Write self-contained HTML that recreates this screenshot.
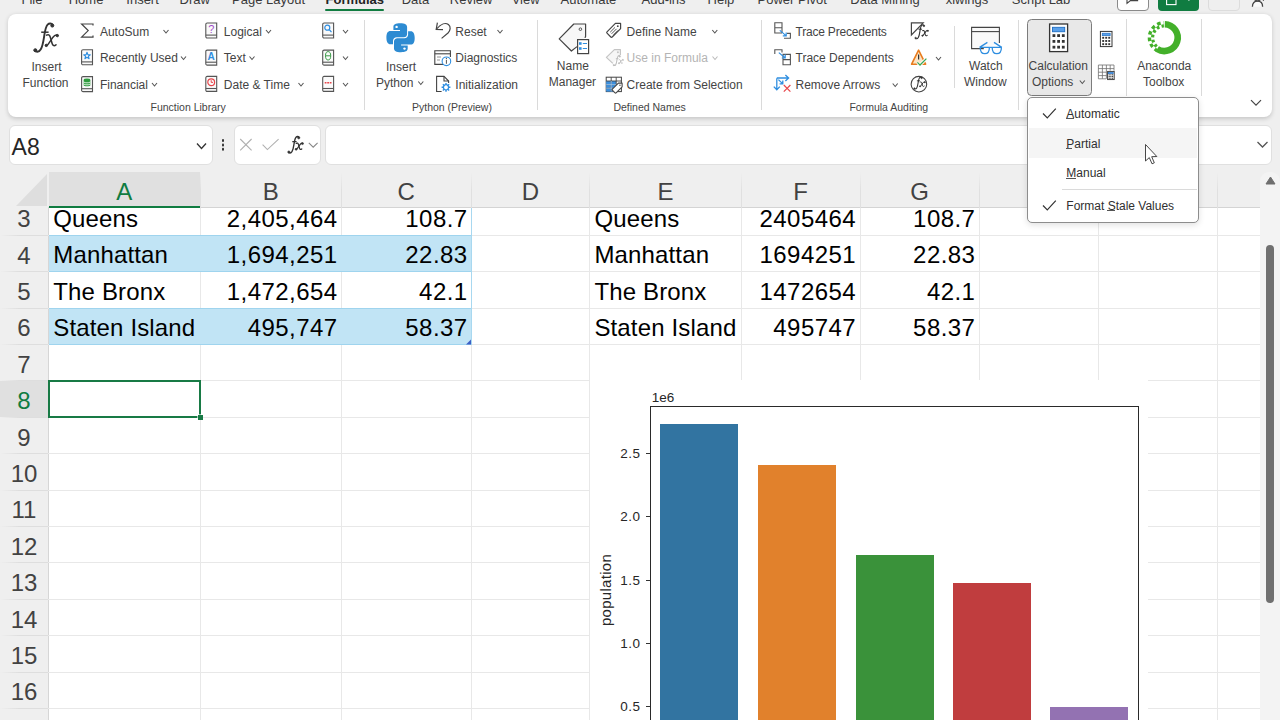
<!DOCTYPE html><html><head><meta charset="utf-8"><style>
*{margin:0;padding:0;box-sizing:border-box}
html,body{width:1280px;height:720px;overflow:hidden;background:#efefef;font-family:"Liberation Sans",sans-serif;position:relative}
.t{position:absolute;white-space:pre;line-height:normal}
.a{position:absolute}
svg{position:absolute;overflow:visible}
</style></head><body>
<div class="t" style="left:21.5px;top:-7.87px;font-size:13px;color:#3a3a3a;font-weight:normal;">File</div>
<div class="t" style="left:68.7px;top:-7.87px;font-size:13px;color:#3a3a3a;font-weight:normal;">Home</div>
<div class="t" style="left:126.3px;top:-7.87px;font-size:13px;color:#3a3a3a;font-weight:normal;">Insert</div>
<div class="t" style="left:179.5px;top:-7.87px;font-size:13px;color:#3a3a3a;font-weight:normal;">Draw</div>
<div class="t" style="left:232px;top:-7.87px;font-size:13px;color:#3a3a3a;font-weight:normal;">Page Layout</div>
<div class="t" style="left:401.7px;top:-7.87px;font-size:13px;color:#3a3a3a;font-weight:normal;">Data</div>
<div class="t" style="left:449.8px;top:-7.87px;font-size:13px;color:#3a3a3a;font-weight:normal;">Review</div>
<div class="t" style="left:511.7px;top:-7.87px;font-size:13px;color:#3a3a3a;font-weight:normal;">View</div>
<div class="t" style="left:560.6px;top:-7.87px;font-size:13px;color:#3a3a3a;font-weight:normal;">Automate</div>
<div class="t" style="left:641.5px;top:-7.87px;font-size:13px;color:#3a3a3a;font-weight:normal;">Add-ins</div>
<div class="t" style="left:707.6px;top:-7.87px;font-size:13px;color:#3a3a3a;font-weight:normal;">Help</div>
<div class="t" style="left:757.5px;top:-7.87px;font-size:13px;color:#3a3a3a;font-weight:normal;">Power Pivot</div>
<div class="t" style="left:850.3px;top:-7.87px;font-size:13px;color:#3a3a3a;font-weight:normal;">Data Mining</div>
<div class="t" style="left:945.7px;top:-7.87px;font-size:13px;color:#3a3a3a;font-weight:normal;">xlwings</div>
<div class="t" style="left:1011.8px;top:-7.87px;font-size:13px;color:#3a3a3a;font-weight:normal;">Script Lab</div>
<div class="t" style="left:325.5px;top:-7.87px;font-size:13px;color:#242424;font-weight:bold;">Formulas</div>
<div class="a" style="left:325px;top:9px;width:58.5px;height:2.2px;border-radius:1px;background:#107c41"></div>
<div class="a" style="left:1117px;top:-6px;width:32px;height:16.5px;border:1px solid #8a8a8a;border-radius:4px;background:#fff"></div>
<div class="a" style="left:1158px;top:-6px;width:41px;height:16.5px;border-radius:4px;background:#107c41"></div>
<div class="a" style="left:1208px;top:-6px;width:31.5px;height:16.5px;border:1px solid #dcdcdc;border-radius:4px;background:#efefef"></div>
<div class="a" style="left:8px;top:14px;width:1263.5px;height:103px;background:#fff;border-radius:8px;box-shadow:0 1.5px 4px rgba(0,0,0,0.17)"></div>
<div class="a" style="left:364.0px;top:20px;width:1px;height:90px;background:#dadada"></div>
<div class="a" style="left:537.0px;top:20px;width:1px;height:90px;background:#dadada"></div>
<div class="a" style="left:761.0px;top:20px;width:1px;height:90px;background:#dadada"></div>
<div class="a" style="left:954.2px;top:26px;width:1px;height:62px;background:#dadada"></div>
<div class="a" style="left:1017.5px;top:20px;width:1px;height:90px;background:#dadada"></div>
<div class="a" style="left:1125.5px;top:19px;width:1px;height:77px;background:#dadada"></div>
<div class="a" style="left:1201.1px;top:19px;width:1px;height:77px;background:#dadada"></div>
<div class="t" style="left:31.5px;top:59.64px;font-size:12px;color:#444444;font-weight:normal;">Insert</div>
<div class="t" style="left:22.5px;top:75.64px;font-size:12px;color:#444444;font-weight:normal;">Function</div>
<div class="t" style="left:99.9px;top:24.94px;font-size:12px;color:#444444;font-weight:normal;">AutoSum</div>
<div class="t" style="left:99.9px;top:51.44px;font-size:12px;color:#444444;font-weight:normal;">Recently Used</div>
<div class="t" style="left:99.9px;top:77.94px;font-size:12px;color:#444444;font-weight:normal;">Financial</div>
<div class="t" style="left:223.8px;top:24.94px;font-size:12px;color:#444444;font-weight:normal;">Logical</div>
<div class="t" style="left:223.8px;top:51.44px;font-size:12px;color:#444444;font-weight:normal;">Text</div>
<div class="t" style="left:223.8px;top:77.94px;font-size:12px;color:#444444;font-weight:normal;">Date &amp; Time</div>
<div class="t" style="left:150.5px;top:100.50px;font-size:10.5px;color:#444;font-weight:normal;">Function Library</div>
<div class="t" style="left:386px;top:59.64px;font-size:12px;color:#444444;font-weight:normal;">Insert</div>
<div class="t" style="left:376px;top:76.14px;font-size:12px;color:#444444;font-weight:normal;">Python</div>
<div class="t" style="left:455.3px;top:24.94px;font-size:12px;color:#444444;font-weight:normal;">Reset</div>
<div class="t" style="left:455.3px;top:51.44px;font-size:12px;color:#444444;font-weight:normal;">Diagnostics</div>
<div class="t" style="left:455.3px;top:77.94px;font-size:12px;color:#444444;font-weight:normal;">Initialization</div>
<div class="t" style="left:412px;top:100.50px;font-size:10.5px;color:#444;font-weight:normal;">Python (Preview)</div>
<div class="t" style="left:556.8px;top:58.94px;font-size:12px;color:#444444;font-weight:normal;">Name</div>
<div class="t" style="left:548.75px;top:74.94px;font-size:12px;color:#444444;font-weight:normal;">Manager</div>
<div class="t" style="left:626.6px;top:24.94px;font-size:12px;color:#444444;font-weight:normal;">Define Name</div>
<div class="t" style="left:626.6px;top:51.44px;font-size:12px;color:#b4b4b4;font-weight:normal;">Use in Formula</div>
<div class="t" style="left:626.6px;top:77.94px;font-size:12px;color:#444444;font-weight:normal;">Create from Selection</div>
<div class="t" style="left:613.4px;top:100.50px;font-size:10.5px;color:#444;font-weight:normal;">Defined Names</div>
<div class="t" style="left:795.5px;top:24.94px;font-size:12px;color:#444444;font-weight:normal;letter-spacing:-0.2px;">Trace Precedents</div>
<div class="t" style="left:795.5px;top:51.44px;font-size:12px;color:#444444;font-weight:normal;">Trace Dependents</div>
<div class="t" style="left:795.5px;top:77.94px;font-size:12px;color:#444444;font-weight:normal;">Remove Arrows</div>
<div class="t" style="left:969px;top:59.14px;font-size:12px;color:#444444;font-weight:normal;">Watch</div>
<div class="t" style="left:963.9px;top:74.64px;font-size:12px;color:#444444;font-weight:normal;">Window</div>
<div class="t" style="left:849.4px;top:100.50px;font-size:10.5px;color:#444;font-weight:normal;">Formula Auditing</div>
<div class="a" style="left:1027px;top:19px;width:65px;height:77px;border:1px solid #7c7c7c;border-radius:4.5px;background:#e8e8e8"></div>
<div class="t" style="left:1028.6px;top:59.14px;font-size:12px;color:#444444;font-weight:normal;">Calculation</div>
<div class="t" style="left:1032px;top:75.44px;font-size:12px;color:#444444;font-weight:normal;">Options</div>
<div class="t" style="left:1137.2px;top:59.14px;font-size:12px;color:#444444;font-weight:normal;">Anaconda</div>
<div class="t" style="left:1143px;top:75.44px;font-size:12px;color:#444444;font-weight:normal;">Toolbox</div>
<svg style="left:0;top:0" width="1" height="1"><path d="M163.5 30.0 L166 33.0 L168.5 30.0" fill="none" stroke="#555" stroke-width="1.1"/></svg>
<svg style="left:0;top:0" width="1" height="1"><path d="M181.0 56.5 L183.5 59.5 L186.0 56.5" fill="none" stroke="#555" stroke-width="1.1"/></svg>
<svg style="left:0;top:0" width="1" height="1"><path d="M152.0 83.0 L154.5 86.0 L157.0 83.0" fill="none" stroke="#555" stroke-width="1.1"/></svg>
<svg style="left:0;top:0" width="1" height="1"><path d="M266.0 30.0 L268.5 33.0 L271.0 30.0" fill="none" stroke="#555" stroke-width="1.1"/></svg>
<svg style="left:0;top:0" width="1" height="1"><path d="M249.5 56.5 L252 59.5 L254.5 56.5" fill="none" stroke="#555" stroke-width="1.1"/></svg>
<svg style="left:0;top:0" width="1" height="1"><path d="M298.5 83.0 L301 86.0 L303.5 83.0" fill="none" stroke="#555" stroke-width="1.1"/></svg>
<svg style="left:0;top:0" width="1" height="1"><path d="M343.0 30.0 L345.5 33.0 L348.0 30.0" fill="none" stroke="#555" stroke-width="1.1"/></svg>
<svg style="left:0;top:0" width="1" height="1"><path d="M343.0 56.5 L345.5 59.5 L348.0 56.5" fill="none" stroke="#555" stroke-width="1.1"/></svg>
<svg style="left:0;top:0" width="1" height="1"><path d="M343.0 83.0 L345.5 86.0 L348.0 83.0" fill="none" stroke="#555" stroke-width="1.1"/></svg>
<svg style="left:0;top:0" width="1" height="1"><path d="M418.3 81.5 L420.8 84.5 L423.3 81.5" fill="none" stroke="#555" stroke-width="1.1"/></svg>
<svg style="left:0;top:0" width="1" height="1"><path d="M497.5 30.0 L500 33.0 L502.5 30.0" fill="none" stroke="#555" stroke-width="1.1"/></svg>
<svg style="left:0;top:0" width="1" height="1"><path d="M712.3 30.0 L714.8 33.0 L717.3 30.0" fill="none" stroke="#555" stroke-width="1.1"/></svg>
<svg style="left:0;top:0" width="1" height="1"><path d="M892.7 83.5 L895.2 86.5 L897.7 83.5" fill="none" stroke="#555" stroke-width="1.1"/></svg>
<svg style="left:0;top:0" width="1" height="1"><path d="M936.0 57.0 L938.5 60.0 L941.0 57.0" fill="none" stroke="#555" stroke-width="1.1"/></svg>
<svg style="left:0;top:0" width="1" height="1"><path d="M1079.8 80.5 L1082.3 83.5 L1084.8 80.5" fill="none" stroke="#555" stroke-width="1.1"/></svg>
<svg style="left:0;top:0" width="1" height="1"><path d="M712.5 56.5 L715 59.5 L717.5 56.5" fill="none" stroke="#bbb" stroke-width="1.1"/></svg>
<svg style="left:0;top:0" width="1" height="1"><path d="M1251.0 100.2 L1256 105.2 L1261.0 100.2" fill="none" stroke="#444" stroke-width="1.2"/></svg>
<div class="a" style="left:9px;top:125px;width:203.5px;height:39.5px;background:#fff;border:1px solid #e0e0e0;border-radius:6px"></div>
<div class="t" style="left:11.6px;top:133.78px;font-size:23px;color:#262626;font-weight:normal;">A8</div>
<svg style="left:0;top:0" width="1" height="1"><path d="M197.0 143.5 L201.5 148.5 L206.0 143.5" fill="none" stroke="#333" stroke-width="1.3"/></svg>
<div class="a" style="left:221.8px;top:139.4px;width:2.4px;height:2.4px;border-radius:2px;background:#333;box-shadow:0 4.4px 0 #333,0 8.8px 0 #333"></div>
<div class="a" style="left:233.5px;top:125px;width:87px;height:39.5px;background:#fff;border:1px solid #e0e0e0;border-radius:6px"></div>
<div class="a" style="left:324.5px;top:125px;width:947px;height:39.5px;background:#fff;border:1px solid #e0e0e0;border-radius:6px"></div>
<svg style="left:0;top:0" width="1" height="1"><path d="M1257.5 142.0 L1262.5 147.0 L1267.5 142.0" fill="none" stroke="#555" stroke-width="1.3"/></svg>
<svg style="left:0;top:0" width="1280" height="720"><g transform="" fill="#333" stroke="#333"><path d="M52.6 24.6 C51.6 23.2 49.2 23.0 47.6 24.6 C45.6 26.6 45.0 31 44.2 36 C43.4 41 42.8 46 40.8 49.2 C39.4 51.6 37.2 52.2 35.4 51.2" fill="none" stroke="#333" stroke-width="1.9" stroke-linecap="round"/><circle cx="52.3" cy="25.6" r="1.5" fill="#333"/><circle cx="35.3" cy="50.2" r="1.5" fill="#333"/><path d="M41.2 32.2 H48.6" stroke="#333" stroke-width="1.5"/><g transform="translate(0 0)"><path d="M46.5 35.2 C48.2 34.2 49.6 34.6 50.4 37.5 L52.2 43.8 C52.8 45.8 54.2 46.2 56 44.8" fill="none" stroke="#333" stroke-width="1.5" stroke-linecap="round"/><path d="M57.6 35.4 C56 34.4 54.6 35 53 37.2 L48.6 43.6 C47.6 45.2 46.8 45.8 45.8 45.4" fill="none" stroke="#333" stroke-width="1.5" stroke-linecap="round"/><circle cx="57.3" cy="35.6" r="1.2" fill="#333"/><circle cx="46.3" cy="45.4" r="1.2" fill="#333"/></g></g><g transform="translate(268.4 122.95) scale(0.58)" fill="#333" stroke="#333"><path d="M52.6 24.6 C51.6 23.2 49.2 23.0 47.6 24.6 C45.6 26.6 45.0 31 44.2 36 C43.4 41 42.8 46 40.8 49.2 C39.4 51.6 37.2 52.2 35.4 51.2" fill="none" stroke="#333" stroke-width="2.4" stroke-linecap="round"/><circle cx="52.3" cy="25.6" r="2.0" fill="#333"/><circle cx="35.3" cy="50.2" r="2.0" fill="#333"/><path d="M41.2 32.2 H48.6" stroke="#333" stroke-width="2.2"/><g transform="translate(1.5 0)"><path d="M46.5 35.2 C48.2 34.2 49.6 34.6 50.4 37.5 L52.2 43.8 C52.8 45.8 54.2 46.2 56 44.8" fill="none" stroke="#333" stroke-width="2.2" stroke-linecap="round"/><path d="M57.6 35.4 C56 34.4 54.6 35 53 37.2 L48.6 43.6 C47.6 45.2 46.8 45.8 45.8 45.4" fill="none" stroke="#333" stroke-width="2.2" stroke-linecap="round"/><circle cx="57.3" cy="35.6" r="1.7" fill="#333"/><circle cx="46.3" cy="45.4" r="1.7" fill="#333"/></g></g><path d="M93 25.6 V24 H81.6 L88.2 30.6 L81.6 37.2 H93 V35.6" fill="none" stroke="#444" stroke-width="1.2" stroke-linejoin="miter"/><g transform="translate(81 49.3)"><path d="M2 0.5 H11.5 V15.5 H2 C1.2 15.5 0.6 14.9 0.6 14.1 V1.9 C0.6 1.1 1.2 0.5 2 0.5 Z" fill="#fafafa" stroke="#555" stroke-width="1.1"/><path d="M0.6 12.6 H11.5" stroke="#555" stroke-width="1.1"/><path d="M6 3 L6.9 5.4 L9.3 5.5 L7.4 7 L8.1 9.4 L6 8 L3.9 9.4 L4.6 7 L2.7 5.5 L5.1 5.4 Z" fill="none" stroke="#2f8ee0" stroke-width="1.1" stroke-linejoin="round"/></g><g transform="translate(81 76.1)"><path d="M2 0.5 H11.5 V15.5 H2 C1.2 15.5 0.6 14.9 0.6 14.1 V1.9 C0.6 1.1 1.2 0.5 2 0.5 Z" fill="#fafafa" stroke="#555" stroke-width="1.1"/><path d="M0.6 12.6 H11.5" stroke="#555" stroke-width="1.1"/><ellipse cx="6" cy="3.8" rx="3.3" ry="1.3" fill="#2e9b3e"/><path d="M2.7 3.8 V9.4 C2.7 10.3 9.3 10.3 9.3 9.4 V3.8" fill="#2e9b3e"/><path d="M2.9 6 C4 7 8 7 9.1 6 M2.9 8 C4 9 8 9 9.1 8" stroke="#fff" stroke-width="0.8" fill="none"/></g><g transform="translate(205.2 22.5)"><path d="M2 0.5 H11.5 V15.5 H2 C1.2 15.5 0.6 14.9 0.6 14.1 V1.9 C0.6 1.1 1.2 0.5 2 0.5 Z" fill="#fafafa" stroke="#555" stroke-width="1.1"/><path d="M0.6 12.6 H11.5" stroke="#555" stroke-width="1.1"/><text x="6" y="10.3" font-family="Liberation Sans" font-size="11" fill="#a04cc8" text-anchor="middle">?</text></g><g transform="translate(205.2 49.6)"><path d="M2 0.5 H11.5 V15.5 H2 C1.2 15.5 0.6 14.9 0.6 14.1 V1.9 C0.6 1.1 1.2 0.5 2 0.5 Z" fill="#fafafa" stroke="#555" stroke-width="1.1"/><path d="M0.6 12.6 H11.5" stroke="#555" stroke-width="1.1"/><text x="6" y="10.3" font-family="Liberation Sans" font-weight="bold" font-size="10" fill="#2f8ee0" text-anchor="middle">A</text></g><g transform="translate(205.2 75.9)"><path d="M2 0.5 H11.5 V15.5 H2 C1.2 15.5 0.6 14.9 0.6 14.1 V1.9 C0.6 1.1 1.2 0.5 2 0.5 Z" fill="#fafafa" stroke="#555" stroke-width="1.1"/><path d="M0.6 12.6 H11.5" stroke="#555" stroke-width="1.1"/><circle cx="6" cy="6.3" r="3.4" fill="none" stroke="#e8474c" stroke-width="1.2"/><path d="M6 4.3 V6.5 H7.8" fill="none" stroke="#e8474c" stroke-width="1"/></g><g transform="translate(322.1 22.5)"><path d="M2 0.5 H11.5 V15.5 H2 C1.2 15.5 0.6 14.9 0.6 14.1 V1.9 C0.6 1.1 1.2 0.5 2 0.5 Z" fill="#fafafa" stroke="#555" stroke-width="1.1"/><path d="M0.6 12.6 H11.5" stroke="#555" stroke-width="1.1"/><circle cx="5.2" cy="5.2" r="2.5" fill="none" stroke="#2f8ee0" stroke-width="1.2"/><path d="M7 7 L9.4 9.6" stroke="#2f8ee0" stroke-width="1.2"/></g><g transform="translate(322.1 49.6)"><path d="M2 0.5 H11.5 V15.5 H2 C1.2 15.5 0.6 14.9 0.6 14.1 V1.9 C0.6 1.1 1.2 0.5 2 0.5 Z" fill="#fafafa" stroke="#555" stroke-width="1.1"/><path d="M0.6 12.6 H11.5" stroke="#555" stroke-width="1.1"/><ellipse cx="6" cy="6.2" rx="2.6" ry="4.2" fill="none" stroke="#3a9b47" stroke-width="1"/><path d="M3.4 6.2 H8.6" stroke="#3a9b47" stroke-width="1"/></g><g transform="translate(322.1 75.9)"><path d="M2 0.5 H11.5 V15.5 H2 C1.2 15.5 0.6 14.9 0.6 14.1 V1.9 C0.6 1.1 1.2 0.5 2 0.5 Z" fill="#fafafa" stroke="#555" stroke-width="1.1"/><path d="M0.6 12.6 H11.5" stroke="#555" stroke-width="1.1"/><path d="M2.6 6.8 H4.4 M5.1 6.8 H6.9 M7.6 6.8 H9.4" stroke="#e8474c" stroke-width="1.5"/></g><g transform="translate(386.4 23.3)"><path d="M7 3.6 C7 1.2 9 0 13.8 0 C18.6 0 20.7 1.4 20.7 3.8 V10.6 C20.7 12.6 19.3 13.9 17.3 13.9 H10.3 C8.2 13.9 6.6 15.6 6.6 17.8 V21 H4 C1.4 21 0 18.6 0 14.2 C0 9.6 1.4 7.6 4 7.6 H13.6 V6.6 H7 Z" fill="#2d8bd2"/><circle cx="10.2" cy="3.6" r="1.2" fill="#fff"/><g transform="rotate(180 14.15 14.45)"><path d="M7 3.6 C7 1.2 9 0 13.8 0 C18.6 0 20.7 1.4 20.7 3.8 V10.6 C20.7 12.6 19.3 13.9 17.3 13.9 H10.3 C8.2 13.9 6.6 15.6 6.6 17.8 V21 H4 C1.4 21 0 18.6 0 14.2 C0 9.6 1.4 7.6 4 7.6 H13.6 V6.6 H7 Z" fill="#2d8bd2"/><circle cx="10.2" cy="3.6" r="1.2" fill="#fff"/></g></g><path d="M437 28.6 C441 24 445.5 22.4 448.4 24.6 C451.2 26.8 450.4 30.4 448 33 L441.6 38.4" fill="none" stroke="#444" stroke-width="1.2"/><path d="M437.4 22.6 L436.2 29.4 L443 29.6" fill="none" stroke="#444" stroke-width="1.2"/><path d="M444 64.4 H434.8 V50.8 H450.4 V57" fill="none" stroke="#444" stroke-width="1.1"/><path d="M434.8 53.8 H450.4" stroke="#444" stroke-width="1.1"/><path d="M437 57 H441 M437 60 H440" stroke="#888" stroke-width="0.9"/><circle cx="446.4" cy="61.3" r="4.3" fill="#fff" stroke="#2f8ee0" stroke-width="1.1"/><path d="M446.4 59.8 V63.8" stroke="#555" stroke-width="1"/><circle cx="446.4" cy="58.4" r="0.6" fill="#555"/><path d="M441.6 91.5 H436.6 V76.4 H444 L448.6 81 V83" fill="none" stroke="#444" stroke-width="1.1"/><path d="M444 76.4 V81 H448.6" fill="none" stroke="#444" stroke-width="1.1"/><g transform="translate(446 87.3)"><circle r="2.6" fill="none" stroke="#2f8ee0" stroke-width="1.3"/><path d="M0 -4.4 V-2.6 M0 2.6 V4.4 M-4.4 0 H-2.6 M2.6 0 H4.4 M-3.1 -3.1 L-1.9 -1.9 M1.9 1.9 L3.1 3.1 M-3.1 3.1 L-1.9 1.9 M1.9 -1.9 L3.1 -3.1" stroke="#2f8ee0" stroke-width="1.4"/></g><path d="M577 46.6 L571.4 51 L559.2 38.8 L573.8 24 H585.6 V36.4 C585.6 37 585.2 37.4 584.6 37.4" fill="#f7f7f7" stroke="#444" stroke-width="1.2" stroke-linejoin="round"/><circle cx="580.4" cy="29.2" r="1.3" fill="none" stroke="#444" stroke-width="0.9"/><rect x="577.6" y="39.6" width="11" height="14" fill="#fff" stroke="#444" stroke-width="1.2"/><rect x="579" y="42.2" width="2.6" height="2.6" fill="#2f8ee0"/><rect x="579" y="47.2" width="2.6" height="2.6" fill="#2f8ee0"/><path d="M582.8 43.5 H587 M582.8 48.5 H587" stroke="#2f8ee0" stroke-width="1"/><g transform="translate(606 22.4)"><path d="M1 9.4 L9.4 1 H14.6 V6.2 L6.2 14.6 C5.8 15 5.2 15 4.8 14.6 L1 10.8 C0.6 10.4 0.6 9.8 1 9.4 Z" fill="#fff" stroke="#444" stroke-width="1.2" stroke-linejoin="round"/><circle cx="11.8" cy="3.8" r="0.9" fill="#444"/><path d="M4.2 9.8 L9 5 M5.6 11.4 L10.6 6.4 M7.2 12.8 L11.6 8.4" stroke="#444" stroke-width="0.9"/></g><path d="M612.8 63.4 L606.4 57.4 L614.4 49.6 H620.4 V55" fill="#f6f6f6" stroke="#c4c4c4" stroke-width="1.2" stroke-linejoin="round"/><circle cx="617.9" cy="52.2" r="1" fill="#c4c4c4"/><g transform="translate(601.45 47.43) scale(0.35)" fill="#bdbdbd" stroke="#bdbdbd"><path d="M52.6 24.6 C51.6 23.2 49.2 23.0 47.6 24.6 C45.6 26.6 45.0 31 44.2 36 C43.4 41 42.8 46 40.8 49.2 C39.4 51.6 37.2 52.2 35.4 51.2" fill="none" stroke="#bdbdbd" stroke-width="3" stroke-linecap="round"/><circle cx="52.3" cy="25.6" r="2.4" fill="#bdbdbd"/><circle cx="35.3" cy="50.2" r="2.4" fill="#bdbdbd"/><path d="M41.2 32.2 H48.6" stroke="#bdbdbd" stroke-width="2.8"/><g transform="translate(4 0)"><path d="M46.5 35.2 C48.2 34.2 49.6 34.6 50.4 37.5 L52.2 43.8 C52.8 45.8 54.2 46.2 56 44.8" fill="none" stroke="#bdbdbd" stroke-width="2.8" stroke-linecap="round"/><path d="M57.6 35.4 C56 34.4 54.6 35 53 37.2 L48.6 43.6 C47.6 45.2 46.8 45.8 45.8 45.4" fill="none" stroke="#bdbdbd" stroke-width="2.8" stroke-linecap="round"/><circle cx="57.3" cy="35.6" r="2" fill="#bdbdbd"/><circle cx="46.3" cy="45.4" r="2" fill="#bdbdbd"/></g></g><g><rect x="606.2" y="77.2" width="15.2" height="14.4" fill="#fff" stroke="#444" stroke-width="1"/><rect x="606.2" y="81" width="10" height="10.6" fill="#3b8fde"/><path d="M606.2 81 H621.4 M606.2 84.6 H621.4 M606.2 88.2 H616 M611.2 77.2 V91.6 M616.2 77.2 V84" stroke="#444" stroke-width="0.9"/><path d="M606.2 84.6 H616 M606.2 88.2 H614 M611.2 81 V91.6" stroke="#9cc7f0" stroke-width="0.9"/></g><g transform="translate(611.6 82.4) scale(0.72)"><path d="M1 9.4 L9.4 1 H14.6 V6.2 L6.2 14.6 C5.8 15 5.2 15 4.8 14.6 L1 10.8 C0.6 10.4 0.6 9.8 1 9.4 Z" fill="#fff" stroke="#444" stroke-width="1.5" stroke-linejoin="round"/><circle cx="11.6" cy="4" r="1" fill="#444"/></g><path d="M782 33 H774.8 V22.8 H782 V33 M774.8 27.8 H782" fill="none" stroke="#555" stroke-width="1.1"/><path d="M784 38.2 H790.4 V33.4 H787" fill="none" stroke="#555" stroke-width="1.1"/><path d="M779.8 30.4 L786 35.6 M786.2 32.4 V35.8 H782.8" fill="none" stroke="#2f8ee0" stroke-width="1.2"/><path d="M774.8 54 V49.8 H782 V52.4" fill="none" stroke="#555" stroke-width="1.1"/><path d="M783 54.4 H790.4 V64.8 H783 Z M783 59.6 H790.4" fill="none" stroke="#555" stroke-width="1.1"/><path d="M778.8 52.6 L785 57.8 M785.2 54.6 V58 H781.8" fill="none" stroke="#2f8ee0" stroke-width="1.2"/><path d="M776.8 78.2 V89.6 M773.8 86.6 L776.8 89.8 L779.8 86.6 M776.8 78 H788.4 M785.4 75 L788.6 78 L785.4 81 M778.4 79.6 L782.6 83.6 M782.8 80.6 V83.8 H779.6" fill="none" stroke="#2f8ee0" stroke-width="1.3"/><path d="M783.8 85 L790.4 91.6 M790.4 85 L783.8 91.6" stroke="#e8474c" stroke-width="1.2"/><path d="M911.4 35 V22.8 H923.2 Z" fill="none" stroke="#444" stroke-width="1.2" stroke-linejoin="miter"/><g transform="translate(898.3 13.4) scale(0.49)" fill="#333" stroke="#333"><path d="M52.6 24.6 C51.6 23.2 49.2 23.0 47.6 24.6 C45.6 26.6 45.0 31 44.2 36 C43.4 41 42.8 46 40.8 49.2 C39.4 51.6 37.2 52.2 35.4 51.2" fill="none" stroke="#333" stroke-width="2.3" stroke-linecap="round"/><circle cx="52.3" cy="25.6" r="1.7" fill="#333"/><circle cx="35.3" cy="50.2" r="1.7" fill="#333"/><path d="M41.2 32.2 H48.6" stroke="#333" stroke-width="2.1"/><g transform="translate(3 0)"><path d="M46.5 35.2 C48.2 34.2 49.6 34.6 50.4 37.5 L52.2 43.8 C52.8 45.8 54.2 46.2 56 44.8" fill="none" stroke="#333" stroke-width="2.1" stroke-linecap="round"/><path d="M57.6 35.4 C56 34.4 54.6 35 53 37.2 L48.6 43.6 C47.6 45.2 46.8 45.8 45.8 45.4" fill="none" stroke="#333" stroke-width="2.1" stroke-linecap="round"/><circle cx="57.3" cy="35.6" r="1.4" fill="#333"/><circle cx="46.3" cy="45.4" r="1.4" fill="#333"/></g></g><path d="M918.6 50.2 L911.6 64.2 H925.6 Z" fill="#fbe3c4" stroke="#e87c1e" stroke-width="1.6" stroke-linejoin="round"/><path d="M918.6 54.6 V59.6" stroke="#333" stroke-width="1.2"/><path d="M917.4 62.6 L920 65 L926.6 58.4" fill="none" stroke="#fff" stroke-width="3"/><path d="M917.4 62.4 L920 65 L926.4 58.6" fill="none" stroke="#3aa655" stroke-width="1.3"/><circle cx="918.9" cy="84.2" r="7.8" fill="none" stroke="#444" stroke-width="1.1"/><g transform="translate(899.6 67.3) scale(0.42)" fill="#333" stroke="#333"><path d="M52.6 24.6 C51.6 23.2 49.2 23.0 47.6 24.6 C45.6 26.6 45.0 31 44.2 36 C43.4 41 42.8 46 40.8 49.2 C39.4 51.6 37.2 52.2 35.4 51.2" fill="none" stroke="#333" stroke-width="2.5" stroke-linecap="round"/><circle cx="52.3" cy="25.6" r="1.8" fill="#333"/><circle cx="35.3" cy="50.2" r="1.8" fill="#333"/><path d="M41.2 32.2 H48.6" stroke="#333" stroke-width="2.3"/><g transform="translate(2.5 0)"><path d="M46.5 35.2 C48.2 34.2 49.6 34.6 50.4 37.5 L52.2 43.8 C52.8 45.8 54.2 46.2 56 44.8" fill="none" stroke="#333" stroke-width="2.3" stroke-linecap="round"/><path d="M57.6 35.4 C56 34.4 54.6 35 53 37.2 L48.6 43.6 C47.6 45.2 46.8 45.8 45.8 45.4" fill="none" stroke="#333" stroke-width="2.3" stroke-linecap="round"/><circle cx="57.3" cy="35.6" r="1.5" fill="#333"/><circle cx="46.3" cy="45.4" r="1.5" fill="#333"/></g></g><path d="M983.8 48.6 H971.6 V27.4 H999.4 V43" fill="#f9f9f9" stroke="#444" stroke-width="1.1"/><path d="M971.6 31.6 H999.4" stroke="#444" stroke-width="1.1"/><path d="M979.6 47.4 H1001.8 M979.6 47.4 L987.4 42.4 M1001.8 47.4 L994 42.4 M980.2 47.4 C980.2 51.4 982.2 53.6 984.8 53.6 C987.4 53.6 989.4 51.4 989.4 47.4 M992.2 47.4 C992.2 51.4 994.2 53.6 996.8 53.6 C999.4 53.6 1001.4 51.4 1001.4 47.4" fill="none" stroke="#2f8ee0" stroke-width="1.3"/><g transform="translate(1049.6 24)"><rect x="0" y="0" width="18" height="27.6" fill="#fff" stroke="#333" stroke-width="1.3"/><rect x="2.88" y="3.312" width="12.24" height="4.416" fill="#5aa0ea" stroke="#1f6fc5" stroke-width="0.9099999999999999"/><rect x="2.92" y="10.19" width="2.8" height="2.8" fill="#333"/><rect x="2.92" y="15.99" width="2.8" height="2.8" fill="#333"/><rect x="2.92" y="21.78" width="2.8" height="2.8" fill="#333"/><rect x="7.60" y="10.19" width="2.8" height="2.8" fill="#333"/><rect x="7.60" y="15.99" width="2.8" height="2.8" fill="#333"/><rect x="7.60" y="21.78" width="2.8" height="2.8" fill="#333"/><rect x="12.28" y="10.19" width="2.8" height="2.8" fill="#333"/><rect x="12.28" y="15.99" width="2.8" height="2.8" fill="#333"/><rect x="12.28" y="21.78" width="2.8" height="2.8" fill="#333"/></g><g transform="translate(1100.4 31.4)"><rect x="0" y="0" width="11.6" height="15.2" fill="#fff" stroke="#333" stroke-width="1"/><rect x="1.8559999999999999" y="1.8239999999999998" width="7.888" height="2.432" fill="#5aa0ea" stroke="#1f6fc5" stroke-width="0.7"/><rect x="1.83" y="5.43" width="1.9" height="1.9" fill="#333"/><rect x="1.83" y="8.63" width="1.9" height="1.9" fill="#333"/><rect x="1.83" y="11.82" width="1.9" height="1.9" fill="#333"/><rect x="4.85" y="5.43" width="1.9" height="1.9" fill="#333"/><rect x="4.85" y="8.63" width="1.9" height="1.9" fill="#333"/><rect x="4.85" y="11.82" width="1.9" height="1.9" fill="#333"/><rect x="7.87" y="5.43" width="1.9" height="1.9" fill="#333"/><rect x="7.87" y="8.63" width="1.9" height="1.9" fill="#333"/><rect x="7.87" y="11.82" width="1.9" height="1.9" fill="#333"/></g><path d="M1106 78.8 H1098.4 V65 H1114 V70.6 M1098.4 68.6 H1114 M1098.4 72.2 H1106.6 M1098.4 75.6 H1106.6 M1102.4 65 V78.8 M1106.4 65 V78.8 M1110.2 65 V70.6" fill="none" stroke="#707070" stroke-width="0.8"/><g transform="translate(1107.6 71.4)"><rect x="0" y="0" width="6.6" height="8.2" fill="#fff" stroke="#333" stroke-width="0.9"/><rect x="1.056" y="0.9839999999999999" width="4.488" height="1.3119999999999998" fill="#5aa0ea" stroke="#1f6fc5" stroke-width="0.63"/><rect x="1.03" y="2.89" width="1.1" height="1.1" fill="#333"/><rect x="1.03" y="4.62" width="1.1" height="1.1" fill="#333"/><rect x="1.03" y="6.34" width="1.1" height="1.1" fill="#333"/><rect x="2.75" y="2.89" width="1.1" height="1.1" fill="#333"/><rect x="2.75" y="4.62" width="1.1" height="1.1" fill="#333"/><rect x="2.75" y="6.34" width="1.1" height="1.1" fill="#333"/><rect x="4.47" y="2.89" width="1.1" height="1.1" fill="#333"/><rect x="4.47" y="4.62" width="1.1" height="1.1" fill="#333"/><rect x="4.47" y="6.34" width="1.1" height="1.1" fill="#333"/></g><path d="M1164.77 24.21 A13.4 13.4 0 1 1 1157.20 48.96" fill="none" stroke="#43b02a" stroke-width="6.6"/><path d="M1156.85 50.50 A14.9 14.9 0 0 1 1163.78 22.71" fill="none" stroke="#43b02a" stroke-width="3.4" stroke-dasharray="3.6 2.9" stroke-dashoffset="1"/><path d="M1158.10 47.52 A11.7 11.7 0 0 1 1163.89 25.91" fill="none" stroke="#43b02a" stroke-width="3.2" stroke-dasharray="2.8 2.3" stroke-dashoffset="3.4"/><path d="M240.2 139 L251.6 150.4 M251.6 139 L240.2 150.4" stroke="#b0b0b0" stroke-width="1.1"/><path d="M262.6 144.6 L267.4 149.6 L278.6 139.2" fill="none" stroke="#b0b0b0" stroke-width="1.1"/><path d="M308.8 142.8 L313.2 147.2 L317.6 142.8" fill="none" stroke="#888" stroke-width="1.1"/><path d="M1127 0 V3.4 L1130.4 0.6 H1137.6 V-3" fill="none" stroke="#444" stroke-width="1.1"/><rect x="1166.6" y="-6" width="9.4" height="10.6" fill="none" stroke="#fff" stroke-width="1.1"/><path d="M1188.6 0.8 L1190.4 -1" stroke="#fff" stroke-width="1"/><path d="M1252.4 6.8 C1252.4 2.8 1254.6 1.2 1257.5 1.2 C1260.4 1.2 1262.6 2.8 1262.6 6.8" fill="#fafafa" stroke="#444" stroke-width="1.3"/><circle cx="1257.5" cy="-3.6" r="4.4" fill="#efefef" stroke="#444" stroke-width="1.3"/><path d="M1263.6 -1 L1263.4 0.8" stroke="#444" stroke-width="1.2"/></svg>
<div class="a" style="left:48px;top:208px;width:1212px;height:512px;background:#fff"></div>
<div class="a" style="left:0;top:208px;width:48.6px;height:512px;background:#efefef;border-right:1px solid #d6d6d6"></div>
<div class="a" style="left:0;top:380.90px;width:48px;height:36.40px;background:#e0e0e0"></div>
<div class="a" style="left:48.5px;top:172px;width:152px;height:36px;background:#e0e0e0"></div>
<div class="a" style="left:48px;top:207px;width:1212px;height:1px;background:#d4d4d4"></div>
<div class="a" style="left:48.5px;top:206.2px;width:152px;height:2px;background:#107c41"></div>
<svg style="left:0;top:0" width="1" height="1"><path d="M47 174 L47 206 L16 206 Z" fill="#dedede"/></svg>
<div class="a" style="left:200.0px;top:172px;width:1px;height:36px;background:linear-gradient(#efefef,#e0e0e0 50%)"></div>
<div class="a" style="left:340.7px;top:172px;width:1px;height:36px;background:linear-gradient(#efefef,#e0e0e0 50%)"></div>
<div class="a" style="left:470.7px;top:172px;width:1px;height:36px;background:linear-gradient(#efefef,#e0e0e0 50%)"></div>
<div class="a" style="left:589.3px;top:172px;width:1px;height:36px;background:linear-gradient(#efefef,#e0e0e0 50%)"></div>
<div class="a" style="left:740.7px;top:172px;width:1px;height:36px;background:linear-gradient(#efefef,#e0e0e0 50%)"></div>
<div class="a" style="left:859.5px;top:172px;width:1px;height:36px;background:linear-gradient(#efefef,#e0e0e0 50%)"></div>
<div class="a" style="left:978.5px;top:172px;width:1px;height:36px;background:linear-gradient(#efefef,#e0e0e0 50%)"></div>
<div class="a" style="left:1097.5px;top:172px;width:1px;height:36px;background:linear-gradient(#efefef,#e0e0e0 50%)"></div>
<div class="a" style="left:1217.0px;top:172px;width:1px;height:36px;background:linear-gradient(#efefef,#e0e0e0 50%)"></div>
<div class="a" style="left:200.0px;top:208px;width:1px;height:512px;background:#e8e8e8"></div>
<div class="a" style="left:340.7px;top:208px;width:1px;height:512px;background:#e8e8e8"></div>
<div class="a" style="left:470.7px;top:208px;width:1px;height:512px;background:#e8e8e8"></div>
<div class="a" style="left:589.3px;top:208px;width:1px;height:512px;background:#e8e8e8"></div>
<div class="a" style="left:740.7px;top:208px;width:1px;height:512px;background:#e8e8e8"></div>
<div class="a" style="left:859.5px;top:208px;width:1px;height:512px;background:#e8e8e8"></div>
<div class="a" style="left:978.5px;top:208px;width:1px;height:512px;background:#e8e8e8"></div>
<div class="a" style="left:1097.5px;top:208px;width:1px;height:512px;background:#e8e8e8"></div>
<div class="a" style="left:1217.0px;top:208px;width:1px;height:512px;background:#e8e8e8"></div>
<div class="a" style="left:48px;top:234.80px;width:1212px;height:1px;background:#e8e8e8"></div>
<div class="a" style="left:0;top:234.80px;width:48px;height:1px;background:linear-gradient(90deg,#efefef,#dedede 40%)"></div>
<div class="a" style="left:48px;top:271.20px;width:1212px;height:1px;background:#e8e8e8"></div>
<div class="a" style="left:0;top:271.20px;width:48px;height:1px;background:linear-gradient(90deg,#efefef,#dedede 40%)"></div>
<div class="a" style="left:48px;top:307.60px;width:1212px;height:1px;background:#e8e8e8"></div>
<div class="a" style="left:0;top:307.60px;width:48px;height:1px;background:linear-gradient(90deg,#efefef,#dedede 40%)"></div>
<div class="a" style="left:48px;top:344.00px;width:1212px;height:1px;background:#e8e8e8"></div>
<div class="a" style="left:0;top:344.00px;width:48px;height:1px;background:linear-gradient(90deg,#efefef,#dedede 40%)"></div>
<div class="a" style="left:48px;top:380.40px;width:1212px;height:1px;background:#e8e8e8"></div>
<div class="a" style="left:0;top:380.40px;width:48px;height:1px;background:linear-gradient(90deg,#efefef,#dedede 40%)"></div>
<div class="a" style="left:48px;top:416.80px;width:1212px;height:1px;background:#e8e8e8"></div>
<div class="a" style="left:0;top:416.80px;width:48px;height:1px;background:linear-gradient(90deg,#efefef,#dedede 40%)"></div>
<div class="a" style="left:48px;top:453.20px;width:1212px;height:1px;background:#e8e8e8"></div>
<div class="a" style="left:0;top:453.20px;width:48px;height:1px;background:linear-gradient(90deg,#efefef,#dedede 40%)"></div>
<div class="a" style="left:48px;top:489.60px;width:1212px;height:1px;background:#e8e8e8"></div>
<div class="a" style="left:0;top:489.60px;width:48px;height:1px;background:linear-gradient(90deg,#efefef,#dedede 40%)"></div>
<div class="a" style="left:48px;top:526.00px;width:1212px;height:1px;background:#e8e8e8"></div>
<div class="a" style="left:0;top:526.00px;width:48px;height:1px;background:linear-gradient(90deg,#efefef,#dedede 40%)"></div>
<div class="a" style="left:48px;top:562.40px;width:1212px;height:1px;background:#e8e8e8"></div>
<div class="a" style="left:0;top:562.40px;width:48px;height:1px;background:linear-gradient(90deg,#efefef,#dedede 40%)"></div>
<div class="a" style="left:48px;top:598.80px;width:1212px;height:1px;background:#e8e8e8"></div>
<div class="a" style="left:0;top:598.80px;width:48px;height:1px;background:linear-gradient(90deg,#efefef,#dedede 40%)"></div>
<div class="a" style="left:48px;top:635.20px;width:1212px;height:1px;background:#e8e8e8"></div>
<div class="a" style="left:0;top:635.20px;width:48px;height:1px;background:linear-gradient(90deg,#efefef,#dedede 40%)"></div>
<div class="a" style="left:48px;top:671.60px;width:1212px;height:1px;background:#e8e8e8"></div>
<div class="a" style="left:0;top:671.60px;width:48px;height:1px;background:linear-gradient(90deg,#efefef,#dedede 40%)"></div>
<div class="a" style="left:48px;top:708.00px;width:1212px;height:1px;background:#e8e8e8"></div>
<div class="a" style="left:0;top:708.00px;width:48px;height:1px;background:linear-gradient(90deg,#efefef,#dedede 40%)"></div>
<div class="t" style="left:24.25px;width:200px;text-align:center;top:177.68px;font-size:24px;color:#107c41;font-weight:normal;">A</div>
<div class="t" style="left:170.85000000000002px;width:200px;text-align:center;top:177.68px;font-size:24px;color:#424242;font-weight:normal;">B</div>
<div class="t" style="left:306.2px;width:200px;text-align:center;top:177.68px;font-size:24px;color:#424242;font-weight:normal;">C</div>
<div class="t" style="left:430.5px;width:200px;text-align:center;top:177.68px;font-size:24px;color:#424242;font-weight:normal;">D</div>
<div class="t" style="left:565.5px;width:200px;text-align:center;top:177.68px;font-size:24px;color:#424242;font-weight:normal;">E</div>
<div class="t" style="left:700.6px;width:200px;text-align:center;top:177.68px;font-size:24px;color:#424242;font-weight:normal;">F</div>
<div class="t" style="left:819.5px;width:200px;text-align:center;top:177.68px;font-size:24px;color:#424242;font-weight:normal;">G</div>
<div class="t" style="left:938.5px;width:200px;text-align:center;top:177.68px;font-size:24px;color:#424242;font-weight:normal;">H</div>
<div class="t" style="left:1057.75px;width:200px;text-align:center;top:177.68px;font-size:24px;color:#424242;font-weight:normal;">I</div>
<div class="t" style="left:-76px;width:200px;text-align:center;top:205.28px;font-size:24px;color:#424242;font-weight:normal;">3</div>
<div class="t" style="left:-76px;width:200px;text-align:center;top:241.68px;font-size:24px;color:#424242;font-weight:normal;">4</div>
<div class="t" style="left:-76px;width:200px;text-align:center;top:278.08px;font-size:24px;color:#424242;font-weight:normal;">5</div>
<div class="t" style="left:-76px;width:200px;text-align:center;top:314.48px;font-size:24px;color:#424242;font-weight:normal;">6</div>
<div class="t" style="left:-76px;width:200px;text-align:center;top:350.88px;font-size:24px;color:#424242;font-weight:normal;">7</div>
<div class="t" style="left:-76px;width:200px;text-align:center;top:387.28px;font-size:24px;color:#107c41;font-weight:normal;">8</div>
<div class="t" style="left:-76px;width:200px;text-align:center;top:423.68px;font-size:24px;color:#424242;font-weight:normal;">9</div>
<div class="t" style="left:-76px;width:200px;text-align:center;top:460.08px;font-size:24px;color:#424242;font-weight:normal;">10</div>
<div class="t" style="left:-76px;width:200px;text-align:center;top:496.48px;font-size:24px;color:#424242;font-weight:normal;">11</div>
<div class="t" style="left:-76px;width:200px;text-align:center;top:532.88px;font-size:24px;color:#424242;font-weight:normal;">12</div>
<div class="t" style="left:-76px;width:200px;text-align:center;top:569.28px;font-size:24px;color:#424242;font-weight:normal;">13</div>
<div class="t" style="left:-76px;width:200px;text-align:center;top:605.68px;font-size:24px;color:#424242;font-weight:normal;">14</div>
<div class="t" style="left:-76px;width:200px;text-align:center;top:642.08px;font-size:24px;color:#424242;font-weight:normal;">15</div>
<div class="t" style="left:-76px;width:200px;text-align:center;top:678.48px;font-size:24px;color:#424242;font-weight:normal;">16</div>
<div class="t" style="left:-76px;width:200px;text-align:center;top:714.88px;font-size:24px;color:#424242;font-weight:normal;">17</div>
<div class="a" style="left:48.5px;top:234.80px;width:423px;height:37.40px;background:#c1e4f5;border-top:1px solid #9fd4ee;border-bottom:1px solid #9fd4ee"></div>
<div class="a" style="left:48.5px;top:307.60px;width:423px;height:37.40px;background:#c1e4f5;border-top:1px solid #9fd4ee;border-bottom:1px solid #9fd4ee"></div>
<div class="a" style="left:470.7px;top:208px;width:1px;height:136.50px;background:#a8d8f0"></div>
<svg style="left:0;top:0" width="1" height="1"><path d="M471 339.50 L471 344.50 L466 344.50 Z" fill="#3b5fc6"/></svg>
<div class="t" style="left:53.3px;top:204.78px;font-size:24px;color:#000;font-weight:normal;letter-spacing:0.15px;">Queens</div>
<div class="t" style="right:942.4px;top:204.78px;font-size:24px;color:#000;font-weight:normal;letter-spacing:0.45px;">2,405,464</div>
<div class="t" style="right:812.4px;top:204.78px;font-size:24px;color:#000;font-weight:normal;letter-spacing:0.45px;">108.7</div>
<div class="t" style="left:594.4px;top:204.78px;font-size:24px;color:#000;font-weight:normal;letter-spacing:0.15px;">Queens</div>
<div class="t" style="right:423.9px;top:204.78px;font-size:24px;color:#000;font-weight:normal;letter-spacing:0.45px;">2405464</div>
<div class="t" style="right:304.6px;top:204.78px;font-size:24px;color:#000;font-weight:normal;letter-spacing:0.45px;">108.7</div>
<div class="t" style="left:53.3px;top:241.18px;font-size:24px;color:#000;font-weight:normal;letter-spacing:0.15px;">Manhattan</div>
<div class="t" style="right:942.4px;top:241.18px;font-size:24px;color:#000;font-weight:normal;letter-spacing:0.45px;">1,694,251</div>
<div class="t" style="right:812.4px;top:241.18px;font-size:24px;color:#000;font-weight:normal;letter-spacing:0.45px;">22.83</div>
<div class="t" style="left:594.4px;top:241.18px;font-size:24px;color:#000;font-weight:normal;letter-spacing:0.15px;">Manhattan</div>
<div class="t" style="right:423.9px;top:241.18px;font-size:24px;color:#000;font-weight:normal;letter-spacing:0.45px;">1694251</div>
<div class="t" style="right:304.6px;top:241.18px;font-size:24px;color:#000;font-weight:normal;letter-spacing:0.45px;">22.83</div>
<div class="t" style="left:53.3px;top:277.58px;font-size:24px;color:#000;font-weight:normal;letter-spacing:0.15px;">The Bronx</div>
<div class="t" style="right:942.4px;top:277.58px;font-size:24px;color:#000;font-weight:normal;letter-spacing:0.45px;">1,472,654</div>
<div class="t" style="right:812.4px;top:277.58px;font-size:24px;color:#000;font-weight:normal;letter-spacing:0.45px;">42.1</div>
<div class="t" style="left:594.4px;top:277.58px;font-size:24px;color:#000;font-weight:normal;letter-spacing:0.15px;">The Bronx</div>
<div class="t" style="right:423.9px;top:277.58px;font-size:24px;color:#000;font-weight:normal;letter-spacing:0.45px;">1472654</div>
<div class="t" style="right:304.6px;top:277.58px;font-size:24px;color:#000;font-weight:normal;letter-spacing:0.45px;">42.1</div>
<div class="t" style="left:53.3px;top:313.98px;font-size:24px;color:#000;font-weight:normal;letter-spacing:0.15px;">Staten Island</div>
<div class="t" style="right:942.4px;top:313.98px;font-size:24px;color:#000;font-weight:normal;letter-spacing:0.45px;">495,747</div>
<div class="t" style="right:812.4px;top:313.98px;font-size:24px;color:#000;font-weight:normal;letter-spacing:0.45px;">58.37</div>
<div class="t" style="left:594.4px;top:313.98px;font-size:24px;color:#000;font-weight:normal;letter-spacing:0.15px;">Staten Island</div>
<div class="t" style="right:423.9px;top:313.98px;font-size:24px;color:#000;font-weight:normal;letter-spacing:0.45px;">495747</div>
<div class="t" style="right:304.6px;top:313.98px;font-size:24px;color:#000;font-weight:normal;letter-spacing:0.45px;">58.37</div>
<div class="a" style="left:47.8px;top:379.70px;width:153.6px;height:38.80px;border:2px solid #187a45"></div>
<div class="a" style="left:197.6px;top:414.70px;width:5px;height:5px;background:#187a45;box-shadow:-0.6px -0.6px 0 #fff"></div>
<div class="a" style="left:590.3px;top:380px;width:557.7px;height:340px;background:#fff"></div>
<div class="a" style="left:650px;top:405.5px;width:489px;height:400px;border:1.1px solid #2a2a2a"></div>
<div class="a" style="left:659.7px;top:423.7px;width:78px;height:306.3px;background:#3274a1"></div>
<div class="a" style="left:758.3px;top:464.5px;width:78px;height:265.5px;background:#e1812c"></div>
<div class="a" style="left:855.9px;top:555.1px;width:78px;height:174.89999999999998px;background:#3a923a"></div>
<div class="a" style="left:953.1px;top:582.7px;width:78px;height:147.29999999999995px;background:#c03d3e"></div>
<div class="a" style="left:1050.4px;top:706.8px;width:78px;height:23.200000000000045px;background:#9372b2"></div>
<div class="a" style="left:645.5px;top:452.5px;width:4.8px;height:1px;background:#333"></div>
<div class="t" style="right:639.7px;top:445.78px;font-size:13.5px;color:#262626;font-weight:normal;letter-spacing:0.4px;">2.5</div>
<div class="a" style="left:645.5px;top:515.7px;width:4.8px;height:1px;background:#333"></div>
<div class="t" style="right:639.7px;top:508.98px;font-size:13.5px;color:#262626;font-weight:normal;letter-spacing:0.4px;">2.0</div>
<div class="a" style="left:645.5px;top:579.6px;width:4.8px;height:1px;background:#333"></div>
<div class="t" style="right:639.7px;top:572.88px;font-size:13.5px;color:#262626;font-weight:normal;letter-spacing:0.4px;">1.5</div>
<div class="a" style="left:645.5px;top:642.6px;width:4.8px;height:1px;background:#333"></div>
<div class="t" style="right:639.7px;top:635.88px;font-size:13.5px;color:#262626;font-weight:normal;letter-spacing:0.4px;">1.0</div>
<div class="a" style="left:645.5px;top:705.9px;width:4.8px;height:1px;background:#333"></div>
<div class="t" style="right:639.7px;top:699.18px;font-size:13.5px;color:#262626;font-weight:normal;letter-spacing:0.4px;">0.5</div>
<div class="t" style="left:651.7px;top:389.78px;font-size:13.5px;color:#262626;font-weight:normal;">1e6</div>
<div class="t" style="left:605px;top:590px;font-size:15px;color:#262626;transform:translate(-50%,-50%) rotate(-90deg);line-height:15px;letter-spacing:0.3px">population</div>
<div class="a" style="left:1260px;top:172px;width:20px;height:548px;background:#f3f3f3;border-radius:9px 9px 0 0"></div>
<svg style="left:0;top:0" width="1" height="1"><path d="M1266 184 L1270.5 177 L1275 184 Z" fill="#6f6f6f" stroke="#6f6f6f" stroke-width="1" stroke-linejoin="round"/></svg>
<div class="a" style="left:1266.3px;top:245px;width:8px;height:358px;border-radius:4px;background:#707070"></div>
<div class="a" style="left:1027px;top:97px;width:172px;height:125.5px;background:#fff;border:1px solid #8d8d8d;border-radius:5px;box-shadow:0 2px 6px rgba(0,0,0,0.12)"></div>
<div class="a" style="left:1029px;top:128.3px;width:168px;height:29.5px;background:#f5f5f5"></div>
<div class="a" style="left:1062px;top:189px;width:135px;height:1px;background:#dadada"></div>
<div class="t" style="left:1066.3px;top:106.94px;font-size:12px;color:#303030;font-weight:normal;">Automatic</div>
<div class="t" style="left:1066.3px;top:136.94px;font-size:12px;color:#303030;font-weight:normal;">Partial</div>
<div class="t" style="left:1066.3px;top:166.44px;font-size:12px;color:#303030;font-weight:normal;">Manual</div>
<div class="t" style="left:1066.3px;top:199.34px;font-size:12px;color:#303030;font-weight:normal;">Format Stale Values</div>
<svg style="left:0;top:0" width="1" height="1"><path d="M1043 113.5 L1047.3 117.8 L1055.8 108.7" fill="none" stroke="#333" stroke-width="1.2"/></svg>
<svg style="left:0;top:0" width="1" height="1"><path d="M1043 205.5 L1047.3 209.8 L1055.8 200.7" fill="none" stroke="#333" stroke-width="1.2"/></svg>
<div class="a" style="left:1066.3px;top:118.4px;width:7.5px;height:1px;background:#555"></div>
<div class="a" style="left:1066.3px;top:148.2px;width:6px;height:1px;background:#555"></div>
<div class="a" style="left:1066.3px;top:177.8px;width:10px;height:1px;background:#555"></div>
<div class="a" style="left:1107.3px;top:210.4px;width:8px;height:1px;background:#555"></div>
<svg style="left:0;top:0" width="1" height="1"><path d="M1145.5 144.5 L1145.5 161 L1149.3 157.6 L1152 163.8 L1154.3 162.8 L1151.7 156.7 L1156.8 156.5 Z" fill="#fff" stroke="#333" stroke-width="0.9" stroke-linejoin="round"/></svg>
</body></html>
